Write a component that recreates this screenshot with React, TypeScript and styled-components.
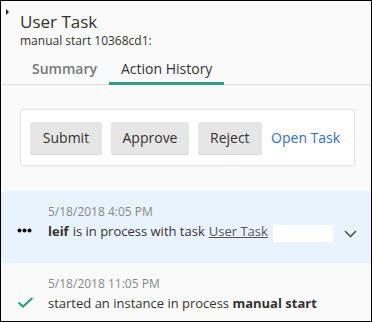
import React from "react";
import styled, { createGlobalStyle } from "styled-components";

const Global = createGlobalStyle`
    html, body {
        margin: 0;
        padding: 0;
        background: #fff;
    }
    * {
        box-sizing: border-box;
    }
`;

const Frame = styled.div`
    width: 372px;
    height: 322px;
    border: 1px solid #000;
    background: #fafafa;
    overflow: hidden;
    font-family: "Open Sans", "Liberation Sans", sans-serif;
    color: #333;
    display: flex;
    flex-direction: column;
`;

const Header = styled.div`
    display: flex;
    align-items: flex-start;
    padding: 8px 0 0 5px;
`;

const Caret = styled.div`
    width: 0;
    height: 0;
    flex-shrink: 0;
    margin-right: 11px;
    border-top: 3px solid transparent;
    border-bottom: 3px solid transparent;
    border-left: 3px solid #222;
`;

const TitleBlock = styled.div`
    display: flex;
    flex-direction: column;
    margin-top: 2px;
    .title {
        font-size: 17px;
        line-height: 22px;
        color: #333;
    }
    .sub {
        font-size: 12px;
        line-height: 16px;
        color: #333;
    }
`;

const Tabs = styled.div`
    display: flex;
    padding-left: 19px;
    margin-top: 10px;
    border-bottom: 1px solid #dcdcdc;
`;

const Tab = styled.div<{ $active?: boolean }>`
    padding: 0 12px 3px;
    font-size: 14px;
    line-height: 20px;
    color: ${(p) => (p.$active ? "#333" : "#777")};
    font-weight: ${(p) => (p.$active ? 500 : 600)};
    border-bottom: 3px solid ${(p) => (p.$active ? "#2e9e80" : "transparent")};
    margin-bottom: -1px;
`;

const Body = styled.div`
    padding: 24px 16px 0 19px;
`;

const Card = styled.div`
    background: #fff;
    border: 1px solid #e2e2e2;
    border-radius: 2px;
    height: 57px;
    display: flex;
    align-items: center;
    gap: 8.5px;
    padding: 0 9px;
`;

const Button = styled.button<{ $minWidth?: number }>`
    font-family: inherit;
    font-size: 14px;
    color: #333;
    background: #e6e6e6;
    border: none;
    border-radius: 3px;
    box-shadow: 0 1px 1px rgba(0, 0, 0, 0.18);
    height: 32px;
    min-width: ${(p) => p.$minWidth ?? 0}px;
    padding: 0 12px;
    cursor: pointer;
`;

const LinkText = styled.a`
    font-size: 14px;
    color: #2a6fd6;
    text-decoration: none;
    margin-left: 1px;
`;

const List = styled.div`
    margin-top: 25px;
    display: flex;
    flex-direction: column;
`;

const Item = styled.div<{ $selected?: boolean }>`
    display: flex;
    align-items: flex-start;
    background: ${(p) => (p.$selected ? "#e9f3fd" : "transparent")};
    height: ${(p) => (p.$selected ? "72px" : "auto")};
    padding: 12px 14px 0 16px;
`;

const IconCell = styled.div<{ $offset: number }>`
    width: 31px;
    flex-shrink: 0;
    padding-top: ${(p) => p.$offset}px;
    display: flex;
`;

const Content = styled.div`
    flex: 1;
    .date {
        font-size: 12px;
        line-height: 18px;
        color: #888;
    }
    .text {
        font-size: 13px;
        line-height: 20px;
        color: #333;
        display: flex;
        align-items: flex-start;
    }
    b {
        font-weight: 700;
        margin-right: 4px;
    }
    u {
        color: #555;
        margin: 0 4px;
    }
`;

const Blank = styled.span`
    display: inline-block;
    width: 60px;
    height: 17px;
    background: #fff;
    margin: 4px 0 0 1px;
`;

const Chevron = styled.div`
    display: flex;
    padding-top: 27px;
    margin-left: auto;
`;

const Dots = () => (
    <svg width="15" height="5" viewBox="0 0 15 5">
        <circle cx="2.5" cy="2.5" r="2" fill="#111" />
        <circle cx="7.5" cy="2.5" r="2" fill="#111" />
        <circle cx="12.5" cy="2.5" r="2" fill="#111" />
    </svg>
);

const Check = () => (
    <svg width="17" height="11" viewBox="0 0 17 11">
        <path d="M1.5 5.5 L6 9.5 L15.5 1" fill="none" stroke="#2e9e80" strokeWidth="2.2" />
    </svg>
);

const Down = () => (
    <svg width="13" height="8" viewBox="0 0 13 8">
        <path d="M1 1 L6.5 6.5 L12 1" fill="none" stroke="#555" strokeWidth="1.6" />
    </svg>
);

export default function App() {
    return (
        <>
            <Global />
            <Frame>
                <Header>
                    <Caret />
                    <TitleBlock>
                        <span className="title">User Task</span>
                        <span className="sub">manual start 10368cd1:</span>
                    </TitleBlock>
                </Header>
                <Tabs>
                    <Tab>Summary</Tab>
                    <Tab $active>Action History</Tab>
                </Tabs>
                <Body>
                    <Card>
                        <Button $minWidth={72}>Submit</Button>
                        <Button>Approve</Button>
                        <Button>Reject</Button>
                        <LinkText href="#">Open Task</LinkText>
                    </Card>
                </Body>
                <List>
                    <Item $selected>
                        <IconCell $offset={25}>
                            <Dots />
                        </IconCell>
                        <Content>
                            <div className="date">5/18/2018 4:05 PM</div>
                            <div className="text">
                                <b>leif</b> is in process with task <u>User Task</u>
                                <Blank />
                            </div>
                        </Content>
                        <Chevron>
                            <Down />
                        </Chevron>
                    </Item>
                    <Item>
                        <IconCell $offset={22}>
                            <Check />
                        </IconCell>
                        <Content>
                            <div className="date">5/18/2018 11:05 PM</div>
                            <div className="text">
                                started an instance in process&nbsp;<b>manual start</b>
                            </div>
                        </Content>
                    </Item>
                </List>
            </Frame>
        </>
    );
}
